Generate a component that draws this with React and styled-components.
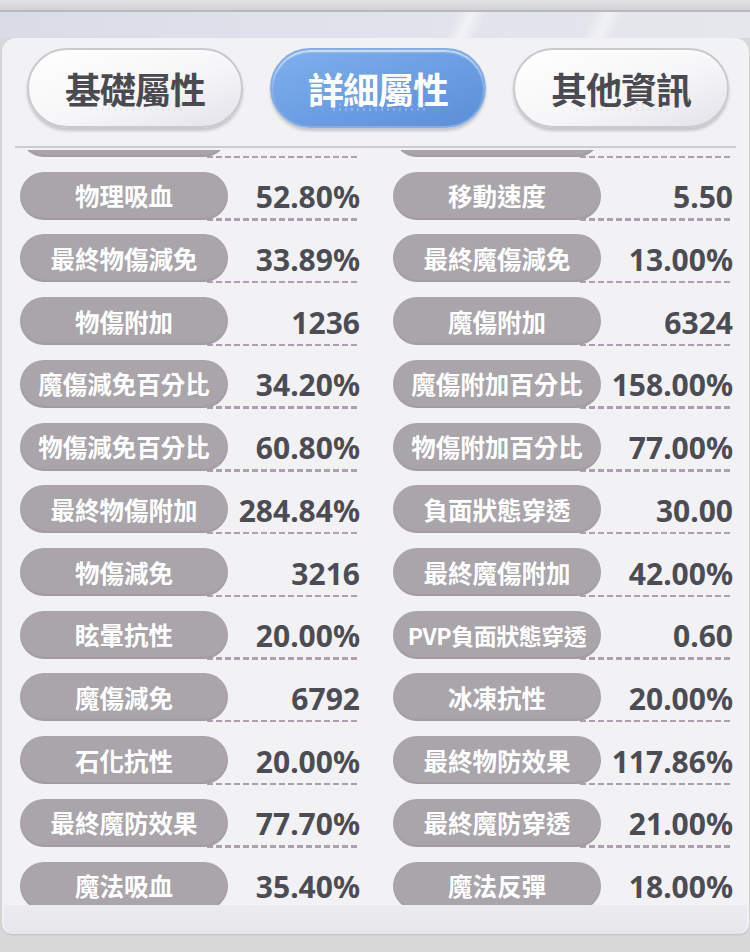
import React from "react";
import styled, { createGlobalStyle } from "styled-components";

const GlobalStyle = createGlobalStyle`
  html, body {
    margin: 0;
    padding: 0;
    background: #d9d9db;
  }
  body {
    width: 750px;
    height: 952px;
    overflow: hidden;
    font-family: "Noto Sans CJK TC", "Noto Sans", sans-serif;
  }
`;

const tabs = [
    { label: "基礎屬性", active: false },
    { label: "詳細屬性", active: true },
    { label: "其他資訊", active: false },
];

// first row is the one scrolled half out of view
const rows = [
    [["", ""], ["", ""]],
    [["物理吸血", "52.80%"], ["移動速度", "5.50"]],
    [["最終物傷減免", "33.89%"], ["最終魔傷減免", "13.00%"]],
    [["物傷附加", "1236"], ["魔傷附加", "6324"]],
    [["魔傷減免百分比", "34.20%"], ["魔傷附加百分比", "158.00%"]],
    [["物傷減免百分比", "60.80%"], ["物傷附加百分比", "77.00%"]],
    [["最終物傷附加", "284.84%"], ["負面狀態穿透", "30.00"]],
    [["物傷減免", "3216"], ["最終魔傷附加", "42.00%"]],
    [["眩暈抗性", "20.00%"], ["PVP負面狀態穿透", "0.60"]],
    [["魔傷減免", "6792"], ["冰凍抗性", "20.00%"]],
    [["石化抗性", "20.00%"], ["最終物防效果", "117.86%"]],
    [["最終魔防效果", "77.70%"], ["最終魔防穿透", "21.00%"]],
    [["魔法吸血", "35.40%"], ["魔法反彈", "18.00%"]],
];

export default function App() {
    return (
        <>
            <GlobalStyle />
            <Screen>
                <TopBar />
                <Backdrop />
                <Panel>
                    <TabRow>
                        {tabs.map((t) => (
                            <Tab key={t.label} $active={t.active}>
                                {t.label}
                            </Tab>
                        ))}
                    </TabRow>
                    <Divider />
                    <ListClip>
                        <StatGrid>
                            {rows.flat().map(([label, value], i) => (
                                <Cell key={i}>
                                    <Pill $tight={label.length > 8}>{label}</Pill>
                                    <Value>{value}</Value>
                                </Cell>
                            ))}
                        </StatGrid>
                    </ListClip>
                    <PanelFoot />
                </Panel>
            </Screen>
        </>
    );
}

const Screen = styled.div`
    width: 750px;
    height: 952px;
    display: flex;
    flex-direction: column;
    background: #d8d8d8;
`;

const TopBar = styled.div`
    height: 10px;
    background: linear-gradient(#e2e2e4, #d2d2d5);
    border-bottom: 2px solid #b9b9bd;
`;

const Backdrop = styled.div`
    height: 26px;
    background: linear-gradient(
            115deg,
            transparent 0 60%,
            rgba(255, 255, 255, 0.55) 62%,
            transparent 64% 78%,
            rgba(255, 255, 255, 0.5) 80%,
            transparent 82%
        ),
        linear-gradient(90deg, #d9dce7, #e1e3ec 50%, #e6e7ec);
`;

const Panel = styled.div`
    margin: 0 1px 0 2px;
    height: 896px;
    background: #f2f2f4;
    border-radius: 14px 14px 10px 10px;
    box-shadow: 0 1px 2px rgba(0, 0, 0, 0.12);
    display: flex;
    flex-direction: column;
    padding-top: 10px;
    box-sizing: border-box;
`;

const TabRow = styled.div`
    display: flex;
    gap: 27px;
    padding: 0 20px 0 25px;
    height: 80px;
`;

const Tab = styled.div`
    flex: 1;
    border-radius: 40px;
    display: flex;
    align-items: center;
    justify-content: center;
    font-size: 36px;
    font-weight: 700;
    letter-spacing: -1px;
    position: relative;
    overflow: hidden;
    box-sizing: border-box;
    color: ${(p) => (p.$active ? "#ffffff" : "#4a4a50")};
    border: 2px solid ${(p) => (p.$active ? "#86aee4" : "#c9c9ce")};
    background: ${(p) =>
        p.$active
            ? "linear-gradient(160deg, #7fb0ee 0%, #6a9de2 55%, #5b8fd6 100%)"
            : "linear-gradient(160deg, #ffffff 0%, #f6f6f8 55%, #e4e2ea 100%)"};
    box-shadow: 0 3px 3px rgba(0, 0, 0, 0.18),
        inset 0 2px 2px rgba(255, 255, 255, 0.7);

    &::after {
        content: "";
        position: absolute;
        left: 28%;
        right: 28%;
        bottom: 14px;
        height: 10px;
        background: radial-gradient(
                circle,
                ${(p) => (p.$active ? "rgba(255,255,255,0.25)" : "rgba(0,0,0,0.05)")} 1px,
                transparent 1.5px
            )
            0 0 / 6px 5px;
    }
`;

const Divider = styled.div`
    height: 2px;
    background: #cccbd3;
    margin: 18px 13px 2px 13px;
`;

const ListClip = styled.div`
    height: 755px;
    overflow: hidden;
    padding: 0 15px 0 18px;
`;

const StatGrid = styled.div`
    margin-top: -41px;
    display: grid;
    grid-template-columns: 340px 340px;
    column-gap: 33px;
    row-gap: 14.73px;
`;

const Cell = styled.div`
    position: relative;
    height: 48px;
    display: flex;
    align-items: center;

    &::after {
        content: "";
        position: absolute;
        left: 187px;
        right: 0;
        bottom: -1px;
        height: 2.5px;
        background: repeating-linear-gradient(
            90deg,
            #ad9eb0 0 6px,
            transparent 6px 9px
        );
    }
`;

const Pill = styled.div`
    position: relative;
    z-index: 1;
    width: 208px;
    height: 48px;
    flex-shrink: 0;
    border-radius: 24px;
    background: #a9a5aa;
    box-shadow: inset 0 -2px 2px rgba(0, 0, 0, 0.06);
    color: #ffffff;
    font-size: ${(p) => (p.$tight ? "23px" : "24.5px")};
    font-weight: 700;
    display: flex;
    align-items: center;
    justify-content: center;
    white-space: nowrap;
    letter-spacing: ${(p) => (p.$tight ? "-0.5px" : "0")};
`;

const Value = styled.div`
    flex: 1;
    text-align: right;
    font-family: "Noto Sans", sans-serif;
    font-size: 30px;
    font-weight: 700;
    color: #4c4c54;
    line-height: 34px;
    padding-top: 3px;
    white-space: nowrap;
`;

const PanelFoot = styled.div`
    flex: 1;
    margin: 0 2px;
    background: linear-gradient(#ececf0, #e6e6ea);
    border-radius: 0 0 10px 10px;
`;
